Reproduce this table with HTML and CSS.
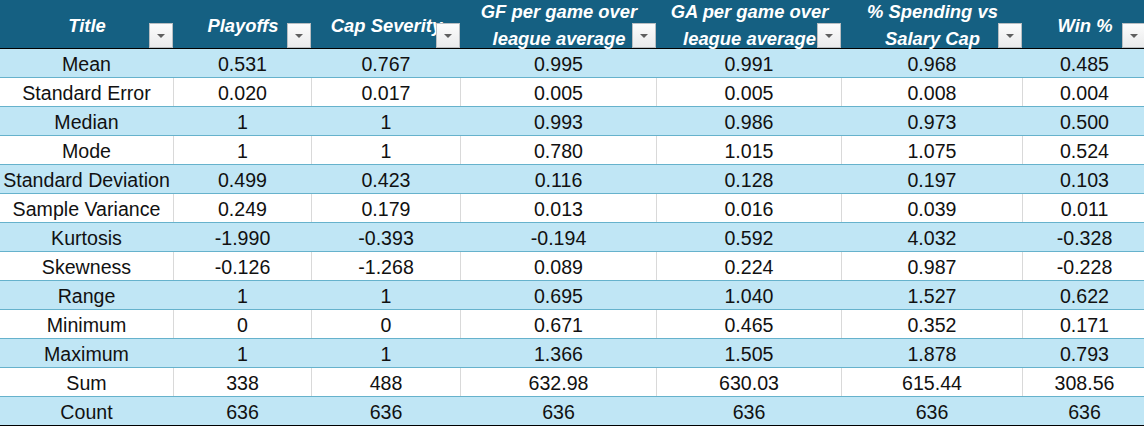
FILE: index.html
```html
<!DOCTYPE html>
<html lang="en">
<head>
<meta charset="utf-8">
<title>Descriptive statistics</title>
<link rel="stylesheet" href="styles.css">
</head>
<body>
<div class="table">
  <div class="row head">
    <div class="cell"><span class="htext">Title</span><span class="dd"><svg viewBox="0 0 8 4" width="8" height="4"><polygon points="0,0 8,0 4,4"/></svg></span></div>
    <div class="cell"><span class="htext">Playoffs</span><span class="dd"><svg viewBox="0 0 8 4" width="8" height="4"><polygon points="0,0 8,0 4,4"/></svg></span></div>
    <div class="cell"><span class="htext nowrap">Cap Severity</span><span class="dd"><svg viewBox="0 0 8 4" width="8" height="4"><polygon points="0,0 8,0 4,4"/></svg></span></div>
    <div class="cell"><span class="htext">GF per game over<br>league average</span><span class="dd"><svg viewBox="0 0 8 4" width="8" height="4"><polygon points="0,0 8,0 4,4"/></svg></span></div>
    <div class="cell"><span class="htext">GA per game over<br>league average</span><span class="dd"><svg viewBox="0 0 8 4" width="8" height="4"><polygon points="0,0 8,0 4,4"/></svg></span></div>
    <div class="cell"><span class="htext">% Spending vs<br>Salary Cap</span><span class="dd"><svg viewBox="0 0 8 4" width="8" height="4"><polygon points="0,0 8,0 4,4"/></svg></span></div>
    <div class="cell"><span class="htext">Win %</span><span class="dd"><svg viewBox="0 0 8 4" width="8" height="4"><polygon points="0,0 8,0 4,4"/></svg></span></div>
  </div>
  <div class="row band"><div class="cell">Mean</div><div class="cell">0.531</div><div class="cell">0.767</div><div class="cell">0.995</div><div class="cell">0.991</div><div class="cell">0.968</div><div class="cell">0.485</div></div>
  <div class="row"><div class="cell">Standard Error</div><div class="cell">0.020</div><div class="cell">0.017</div><div class="cell">0.005</div><div class="cell">0.005</div><div class="cell">0.008</div><div class="cell">0.004</div></div>
  <div class="row band"><div class="cell">Median</div><div class="cell">1</div><div class="cell">1</div><div class="cell">0.993</div><div class="cell">0.986</div><div class="cell">0.973</div><div class="cell">0.500</div></div>
  <div class="row"><div class="cell">Mode</div><div class="cell">1</div><div class="cell">1</div><div class="cell">0.780</div><div class="cell">1.015</div><div class="cell">1.075</div><div class="cell">0.524</div></div>
  <div class="row band"><div class="cell">Standard Deviation</div><div class="cell">0.499</div><div class="cell">0.423</div><div class="cell">0.116</div><div class="cell">0.128</div><div class="cell">0.197</div><div class="cell">0.103</div></div>
  <div class="row"><div class="cell">Sample Variance</div><div class="cell">0.249</div><div class="cell">0.179</div><div class="cell">0.013</div><div class="cell">0.016</div><div class="cell">0.039</div><div class="cell">0.011</div></div>
  <div class="row band"><div class="cell">Kurtosis</div><div class="cell">-1.990</div><div class="cell">-0.393</div><div class="cell">-0.194</div><div class="cell">0.592</div><div class="cell">4.032</div><div class="cell">-0.328</div></div>
  <div class="row"><div class="cell">Skewness</div><div class="cell">-0.126</div><div class="cell">-1.268</div><div class="cell">0.089</div><div class="cell">0.224</div><div class="cell">0.987</div><div class="cell">-0.228</div></div>
  <div class="row band"><div class="cell">Range</div><div class="cell">1</div><div class="cell">1</div><div class="cell">0.695</div><div class="cell">1.040</div><div class="cell">1.527</div><div class="cell">0.622</div></div>
  <div class="row"><div class="cell">Minimum</div><div class="cell">0</div><div class="cell">0</div><div class="cell">0.671</div><div class="cell">0.465</div><div class="cell">0.352</div><div class="cell">0.171</div></div>
  <div class="row band"><div class="cell">Maximum</div><div class="cell">1</div><div class="cell">1</div><div class="cell">1.366</div><div class="cell">1.505</div><div class="cell">1.878</div><div class="cell">0.793</div></div>
  <div class="row"><div class="cell">Sum</div><div class="cell">338</div><div class="cell">488</div><div class="cell">632.98</div><div class="cell">630.03</div><div class="cell">615.44</div><div class="cell">308.56</div></div>
  <div class="row band last"><div class="cell">Count</div><div class="cell">636</div><div class="cell">636</div><div class="cell">636</div><div class="cell">636</div><div class="cell">636</div><div class="cell">636</div></div>
</div>
</body>
</html>
```
FILE: styles.css
```css
html, body {
  margin: 0;
  padding: 0;
  background: #ffffff;
  overflow: hidden;
}

.table {
  width: 1147px;
  font-family: "Liberation Sans", Arial, sans-serif;
  font-size: 19.6px;
  color: #111111;
}

.row {
  display: grid;
  grid-template-columns: 174px 138px 149px 196px 185px 181px 124px;
  grid-template-rows: 28px;
  height: 29px;
  background: #ffffff;
  border-bottom: 1px solid #66b2cc;
  box-sizing: border-box;
}

.row .cell {
  box-sizing: border-box;
  border-right: 1px solid #d9d9d9;
  display: flex;
  align-items: center;
  justify-content: center;
  padding-top: 3px;
  white-space: nowrap;
  overflow: visible;
  min-height: 0;
}

.row.band {
  background: #c0e6f5;
}

.row.band .cell {
  border-right-color: #c0e6f5;
}

.row.last {
  border-bottom: 1px solid #000000;
}

.row.head {
  height: 49px;
  grid-template-rows: 48px;
  background: #156082;
  border-bottom: 1px solid #000000;
}

.row.head .cell {
  position: relative;
  border-right: none;
  padding-top: 2px;
  padding-bottom: 0;
  color: #ffffff;
  font-weight: bold;
  font-style: italic;
  font-size: 18.4px;
  line-height: 27px;
  text-align: center;
}

.htext {
  display: block;
  flex-shrink: 0;
}

.dd {
  position: absolute;
  right: 1px;
  bottom: 0;
  width: 24px;
  height: 25px;
  box-sizing: border-box;
  border: 1px solid #b9bec2;
  background: linear-gradient(#fcfcfc, #eaebec);
  display: flex;
  align-items: center;
  justify-content: center;
}

.dd svg {
  display: block;
  fill: #5f5f5f;
}
```
